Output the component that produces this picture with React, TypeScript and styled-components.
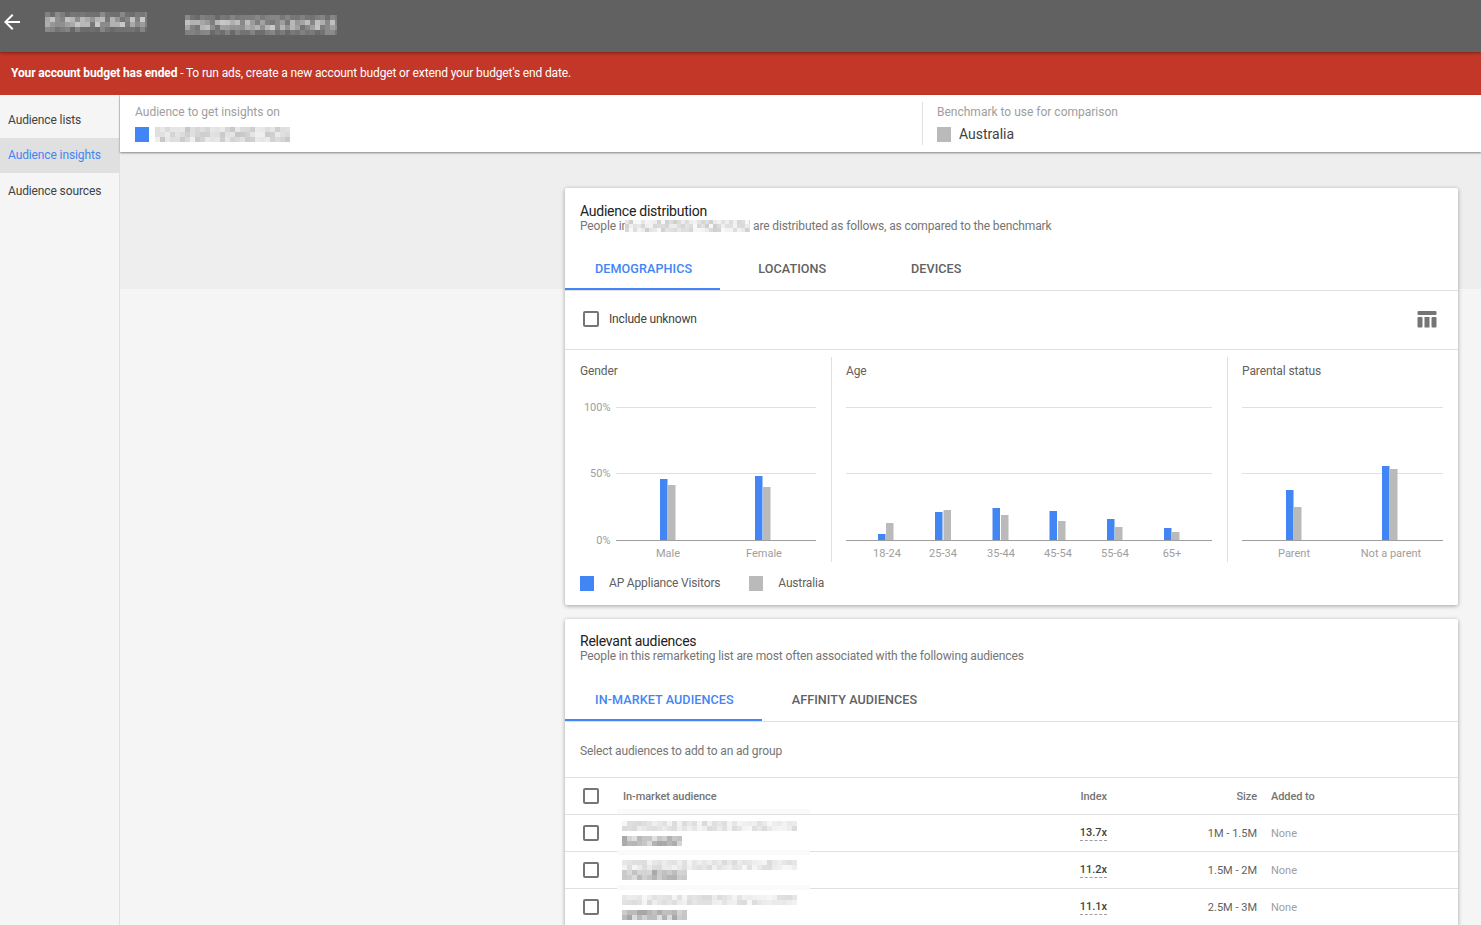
import React from 'react';
import styled, { createGlobalStyle } from 'styled-components';

const GlobalStyle = createGlobalStyle`
  html, body, #root {
    height: 100%;
    margin: 0;
  }
  body {
    overflow: hidden;
    font-family: Roboto, "Liberation Sans", sans-serif;
    color: #616161;
    background: #fff;
  }
`;

const Page = styled.div`
  display: flex;
  flex-direction: column;
  height: 100vh;
  overflow: hidden;
`;

const TopBar = styled.div`
  display: flex;
  align-items: center;
  flex: none;
  height: 52px;
  padding-bottom: 8px;
  box-sizing: border-box;
  background: #616161;
  box-shadow: 0 1px 3px rgba(0, 0, 0, 0.4);
  position: relative;
`;

const BackIcon = styled.svg`
  width: 24px;
  height: 24px;
  margin: 0 21px 0 0;
  fill: #fff;
`;

const Alert = styled.div`
  display: flex;
  align-items: center;
  flex: none;
  height: 43px;
  box-sizing: border-box;
  padding: 0 0 1px 11px;
  background: #c23727;
  color: #fff;
  font-size: 12px;
  letter-spacing: -0.135px;
`;

const AlertStrong = styled.strong`
  font-weight: 700;
  white-space: pre;
`;

const Body = styled.div`
  display: flex;
  flex: 1;
  min-height: 0;
`;

const Sidebar = styled.nav`
  flex: none;
  width: 120px;
  box-sizing: border-box;
  padding-top: 7px;
  background: #f5f5f5;
  border-right: 1px solid #e0e0e0;
`;

const NavItem = styled.div<{ $active?: boolean }>`
  display: flex;
  align-items: center;
  height: 35.5px;
  padding-left: 8px;
  font-size: 12px;
  letter-spacing: -0.12px;
  color: ${p => (p.$active ? '#4285f4' : '#424242')};
  background: ${p => (p.$active ? '#e0e0e0' : 'transparent')};
`;

const Main = styled.main`
  display: flex;
  flex-direction: column;
  flex: 1;
  min-width: 0;
`;

const SelectorBar = styled.div`
  display: flex;
  flex: none;
  height: 57px;
  box-sizing: border-box;
  padding-top: 7px;
  background: #fff;
  box-shadow: 0 1px 2px rgba(0, 0, 0, 0.45);
  position: relative;
`;

const Selector = styled.div<{ $divided?: boolean }>`
  box-sizing: border-box;
  height: 43px;
  padding-left: ${p => (p.$divided ? '14px' : '15px')};
  width: ${p => (p.$divided ? 'auto' : '802px')};
  flex: ${p => (p.$divided ? '1' : 'none')};
  border-left: ${p => (p.$divided ? '1px solid #e0e0e0' : 'none')};
`;

const SelectorLabel = styled.div`
  font-size: 12px;
  line-height: 20px;
  color: #9e9e9e;
`;

const SelectorValue = styled.div`
  display: flex;
  align-items: center;
  height: 24px;
  font-size: 14px;
  color: #424242;
`;

const Swatch = styled.span<{ $grey?: boolean }>`
  flex: none;
  width: 14px;
  height: 15px;
  background: ${p => (p.$grey ? '#bababa' : '#4285f4')};
`;

const SelectorName = styled.span<{ $tight?: boolean }>`
  margin-left: ${p => (p.$tight ? '6px' : '8px')};
`;

const Content = styled.div`
  flex: 1;
  min-height: 0;
  padding: 36px 23px 0 445px;
  background: linear-gradient(#eeeeee 137px, #f5f5f5 137px);
`;

const Card = styled.section`
  margin-bottom: 14px;
  background: #fff;
  border-radius: 2px;
  box-shadow: 0 1px 4px rgba(0, 0, 0, 0.35);
`;

const CardHead = styled.header<{ $raised?: boolean }>`
  padding: ${p => (p.$raised ? '14px 15px 16px' : '15px')};
`;

const CardTitle = styled.h2`
  margin: 0;
  font-size: 14px;
  letter-spacing: -0.24px;
  font-weight: 400;
  line-height: 16px;
  color: #212121;
`;

const CardSub = styled.div`
  display: flex;
  align-items: center;
  height: 14px;
  font-size: 12px;
  letter-spacing: -0.135px;
  color: #757575;
  white-space: pre;
`;

const InlineRedact = styled.span`
  display: flex;
  flex: none;
  margin: 0 3px 0 -3px;
  background: #fff;
`;

const Tabs = styled.div`
  display: flex;
  height: 43px;
  box-sizing: border-box;
  border-bottom: 1px solid #e0e0e0;
`;

const Tab = styled.div<{ $active?: boolean; $even?: boolean }>`
  display: flex;
  align-items: center;
  justify-content: center;
  box-sizing: border-box;
  height: 42px;
  min-width: 144px;
  padding: 1px ${p => (p.$even ? '29px' : '28px')} 0 ${p => (p.$even ? '29px' : '30px')};
  font-size: 12.6px;
  letter-spacing: 0.08px;
  font-weight: 500;
  color: ${p => (p.$active ? '#4285f4' : '#616161')};
  border-bottom: 2px solid ${p => (p.$active ? '#4285f4' : 'transparent')};
`;

const Toolbar = styled.div`
  display: flex;
  align-items: center;
  justify-content: space-between;
  height: 59px;
  box-sizing: border-box;
  padding: 0 21px 2px 18px;
  border-bottom: 1px solid #e0e0e0;
`;

const CheckLabel = styled.label`
  display: flex;
  align-items: center;
  gap: 10px;
  font-size: 12px;
  letter-spacing: -0.17px;
  color: #424242;
`;

const Checkbox = styled.span`
  display: block;
  flex: none;
  width: 16px;
  height: 16px;
  box-sizing: border-box;
  border: 2px solid #757575;
  border-radius: 2px;
`;

const ColumnsIcon = styled.svg`
  display: block;
  width: 20px;
  height: 17px;
  fill: #757575;
`;

const ChartRow = styled.div`
  display: flex;
  padding-top: 7px;
`;

const ChartPanel = styled.div<{ $width: number; $pad: number; $last?: boolean }>`
  flex: none;
  box-sizing: border-box;
  width: ${p => p.$width}px;
  height: 205px;
  padding: 7px 0 0 ${p => p.$pad}px;
  border-right: ${p => (p.$last ? 'none' : '1px solid #e0e0e0')};
`;

const PanelTitle = styled.div`
  font-size: 12px;
  letter-spacing: -0.1px;
  line-height: 14px;
  color: #616161;
`;

const ChartSvg = styled.svg`
  display: block;
  overflow: visible;
`;

const AxisText = styled.text`
  font-family: Roboto, "Liberation Sans", sans-serif;
  font-size: 11px;
  fill: #9e9e9e;
`;

const Legend = styled.div`
  display: flex;
  align-items: center;
  height: 43px;
  padding-left: 15px;
  font-size: 12px;
  letter-spacing: -0.17px;
  color: #616161;
`;

const LegendLabel = styled.span`
  margin: 0 29px 0 15px;
  padding-bottom: 1px;
`;

const SelectHint = styled.div`
  display: flex;
  align-items: center;
  height: 56px;
  box-sizing: border-box;
  padding: 3px 0 0 15px;
  font-size: 12px;
  letter-spacing: -0.135px;
  color: #757575;
  border-bottom: 1px solid #e0e0e0;
`;

const TableRow = styled.div`
  display: grid;
  grid-template-columns: 58px 384px 100px 150px 1fr;
  align-items: center;
  height: 37px;
  box-sizing: border-box;
  border-bottom: 1px solid #e0e0e0;
  font-size: 11px;
`;

const CheckCell = styled.div`
  padding-left: 18px;
`;

const HeadCell = styled.div<{ $right?: boolean; $gap?: boolean }>`
  font-weight: 500;
  letter-spacing: -0.08px;
  color: #757575;
  text-align: ${p => (p.$right ? 'right' : 'left')};
  padding-left: ${p => (p.$gap ? '14px' : '0')};
`;

// the ::before is the faint smear the blur left over the row line above
const NameCell = styled.div<{ $gap: number; $smear: number }>`
  display: flex;
  flex-direction: column;
  gap: ${p => p.$gap}px;
  margin-left: -1px;
  position: relative;

  &::before {
    content: '';
    position: absolute;
    top: ${p => p.$smear}px;
    left: -5px;
    width: 193px;
    height: 5px;
    background: #fafafa;
  }
`;

const IndexCell = styled.div`
  text-align: right;
`;

const IndexValue = styled.span`
  display: inline-block;
  margin-top: -2px;
  line-height: 13px;
  font-weight: 500;
  color: #424242;
  padding-bottom: 1px;
  border-bottom: 1px dashed #9e9e9e;
`;

const SizeCell = styled.div`
  text-align: right;
  color: #616161;
`;

const AddedCell = styled.div`
  padding-left: 14px;
  color: #9e9e9e;
`;

const RedactSvg = styled.svg`
  display: block;
  flex: none;
`;

const TopRedact = styled.div<{ $gap: number; $drop: number }>`
  margin: ${p => p.$drop}px ${p => p.$gap}px 0 0;
`;

interface RedactProps {
  width: number;
  height: number;
  cell: number;
  seed: number;
  color: string;
  base?: number;
  max?: number;
  shaped?: boolean;
}

// pixelated smear standing in for the blurred-out names
const Redact: React.FC<RedactProps> = ({ width, height, cell, seed, color, base = 0.12, max = 0.6, shaped }) => {
  const cols = Math.ceil(width / cell);
  const rows = Math.ceil(height / cell);
  const cells: React.ReactNode[] = [];
  for (let y = 0; y < rows; y++) {
    const fade = shaped ? Math.sin((Math.PI * (y + 0.5)) / rows) : 1;
    for (let x = 0; x < cols; x++) {
      const n = Math.sin((x + 1) * 12.9898 + (y + 1) * 78.233 + seed) * 43758.5453;
      const v = n - Math.floor(n);
      cells.push(
        <rect
          key={`${x}-${y}`}
          x={x * cell}
          y={y * cell}
          width={cell}
          height={cell}
          fill={color}
          opacity={(base + v * max) * fade}
        />
      );
    }
  }
  return (
    <RedactSvg width={width} height={height} viewBox={`0 0 ${width} ${height}`} shapeRendering="crispEdges">
      {cells}
    </RedactSvg>
  );
};

interface Group {
  label: string;
  center: number;
  blueX: number;
  greyX: number;
  blueTop: number;
  greyTop: number;
}

interface ChartProps {
  left: number;
  lineStart: number;
  lineEnd: number;
  groups: Group[];
  yLabels?: boolean;
}

const CHART_TOP = 378;

const Chart: React.FC<ChartProps> = ({ left, lineStart, lineEnd, groups, yLabels }) => {
  const y = (v: number) => v - CHART_TOP;
  const x = (v: number) => v - left;
  const width = lineEnd - left;
  return (
    <ChartSvg width={width} height={184} viewBox={`0 0 ${width} 184`}>
      {[407.5, 473.5].map(line => (
        <line key={line} x1={x(lineStart)} x2={x(lineEnd)} y1={y(line)} y2={y(line)} stroke="#e0e0e0" />
      ))}
      {groups.map(g => (
        <g key={g.label}>
          <rect x={x(g.blueX)} y={y(g.blueTop)} width={7.5} height={540 - g.blueTop} fill="#4285f4" />
          <rect x={x(g.greyX)} y={y(g.greyTop)} width={7.5} height={540 - g.greyTop} fill="#bababa" />
          <AxisText x={x(g.center)} y={y(557)} textAnchor="middle">
            {g.label}
          </AxisText>
        </g>
      ))}
      <line x1={x(lineStart)} x2={x(lineEnd)} y1={y(540.5)} y2={y(540.5)} stroke="#9e9e9e" />
      {yLabels && (
        <>
          <AxisText x={x(610.5)} y={y(411)} textAnchor="end">100%</AxisText>
          <AxisText x={x(610.5)} y={y(477)} textAnchor="end">50%</AxisText>
          <AxisText x={x(610.5)} y={y(544)} textAnchor="end">0%</AxisText>
        </>
      )}
    </ChartSvg>
  );
};

const gender: Group[] = [
  { label: 'Male', center: 668, blueX: 660, greyX: 668, blueTop: 479, greyTop: 485 },
  { label: 'Female', center: 764, blueX: 755, greyX: 763, blueTop: 476, greyTop: 487 }
];

const age: Group[] = [
  { label: '18-24', center: 887, blueX: 878, greyX: 886, blueTop: 534, greyTop: 523 },
  { label: '25-34', center: 943, blueX: 935, greyX: 943.5, blueTop: 512, greyTop: 510 },
  { label: '35-44', center: 1001, blueX: 992.5, greyX: 1001, blueTop: 508, greyTop: 515 },
  { label: '45-54', center: 1058, blueX: 1049.5, greyX: 1058, blueTop: 511, greyTop: 521 },
  { label: '55-64', center: 1115, blueX: 1107, greyX: 1115, blueTop: 519, greyTop: 527 },
  { label: '65+', center: 1172, blueX: 1164, greyX: 1172, blueTop: 528, greyTop: 532 }
];

const parental: Group[] = [
  { label: 'Parent', center: 1294, blueX: 1286, greyX: 1294, blueTop: 490, greyTop: 507 },
  { label: 'Not a parent', center: 1391, blueX: 1382, greyX: 1390, blueTop: 466, greyTop: 469 }
];

const audiences = [
  { seed: 3, second: 60, gap: 5, smear: -12, index: '13.7x', size: '1M - 1.5M' },
  { seed: 9, second: 65, gap: 0, smear: -10, index: '11.2x', size: '1.5M - 2M' },
  { seed: 17, second: 65, gap: 5, smear: -10, index: '11.1x', size: '2.5M - 3M' }
];

const App: React.FC = () => (
  <Page>
    <GlobalStyle />
    <TopBar>
      <BackIcon viewBox="0 0 24 24">
        <path d="M20 11H7.83l5.59-5.59L12 4l-8 8 8 8 1.41-1.41L7.83 13H20v-2z" />
      </BackIcon>
      <TopRedact $gap={38} $drop={0}>
        <Redact width={102} height={20} cell={5} seed={1} color="#ffffff" shaped />
      </TopRedact>
      <TopRedact $gap={0} $drop={6}>
        <Redact width={152} height={20} cell={5} seed={5} color="#ffffff" shaped />
      </TopRedact>
    </TopBar>
    <Alert>
      <AlertStrong>Your account budget has ended</AlertStrong>
      &nbsp;- To run ads, create a new account budget or extend your budget's end date.
    </Alert>
    <Body>
      <Sidebar>
        <NavItem>Audience lists</NavItem>
        <NavItem $active>Audience insights</NavItem>
        <NavItem>Audience sources</NavItem>
      </Sidebar>
      <Main>
        <SelectorBar>
          <Selector>
            <SelectorLabel>Audience to get insights on</SelectorLabel>
            <SelectorValue>
              <Swatch />
              <SelectorName $tight>
                <Redact width={135} height={15} cell={5} seed={11} color="#9e9e9e" base={0.15} max={0.45} />
              </SelectorName>
            </SelectorValue>
          </Selector>
          <Selector $divided>
            <SelectorLabel>Benchmark to use for comparison</SelectorLabel>
            <SelectorValue>
              <Swatch $grey />
              <SelectorName>Australia</SelectorName>
            </SelectorValue>
          </Selector>
        </SelectorBar>
        <Content>
          <Card>
            <CardHead>
              <CardTitle>Audience distribution</CardTitle>
              <CardSub>
                People in
                <InlineRedact>
                  <Redact width={125} height={12} cell={4} seed={21} color="#9e9e9e" base={0.05} max={0.45} />
                </InlineRedact>
                are distributed as follows, as compared to the benchmark
              </CardSub>
            </CardHead>
            <Tabs>
              <Tab $active>DEMOGRAPHICS</Tab>
              <Tab $even>LOCATIONS</Tab>
              <Tab $even>DEVICES</Tab>
            </Tabs>
            <Toolbar>
              <CheckLabel>
                <Checkbox />
                Include unknown
              </CheckLabel>
              <ColumnsIcon viewBox="0 0 20 17">
                <rect x="0.5" y="0" width="19" height="4" rx="1" />
                <rect x="0.5" y="6" width="5" height="10.5" rx="1" />
                <rect x="7.5" y="6" width="5" height="10.5" />
                <rect x="14.5" y="6" width="5" height="10.5" rx="1" />
              </ColumnsIcon>
            </Toolbar>
            <ChartRow>
              <ChartPanel $width={267} $pad={15}>
                <PanelTitle>Gender</PanelTitle>
                <Chart left={580} lineStart={616} lineEnd={816} groups={gender} yLabels />
              </ChartPanel>
              <ChartPanel $width={396} $pad={14}>
                <PanelTitle>Age</PanelTitle>
                <Chart left={846} lineStart={846} lineEnd={1212} groups={age} />
              </ChartPanel>
              <ChartPanel $width={230} $pad={14} $last>
                <PanelTitle>Parental status</PanelTitle>
                <Chart left={1242} lineStart={1242} lineEnd={1443} groups={parental} />
              </ChartPanel>
            </ChartRow>
            <Legend>
              <Swatch />
              <LegendLabel>AP Appliance Visitors</LegendLabel>
              <Swatch $grey />
              <LegendLabel>Australia</LegendLabel>
            </Legend>
          </Card>
          <Card>
            <CardHead $raised>
              <CardTitle>Relevant audiences</CardTitle>
              <CardSub>People in this remarketing list are most often associated with the following audiences</CardSub>
            </CardHead>
            <Tabs>
              <Tab $active>IN-MARKET AUDIENCES</Tab>
              <Tab>AFFINITY AUDIENCES</Tab>
            </Tabs>
            <SelectHint>Select audiences to add to an ad group</SelectHint>
            <TableRow>
              <CheckCell>
                <Checkbox />
              </CheckCell>
              <HeadCell>In-market audience</HeadCell>
              <HeadCell $right>Index</HeadCell>
              <HeadCell $right>Size</HeadCell>
              <HeadCell $gap>Added to</HeadCell>
            </TableRow>
            {audiences.map(a => (
              <TableRow key={a.index}>
                <CheckCell>
                  <Checkbox />
                </CheckCell>
                <NameCell $gap={a.gap} $smear={a.smear}>
                  <Redact width={175} height={10} cell={5} seed={a.seed} color="#9e9e9e" base={0.08} max={0.3} />
                  <Redact width={a.second} height={10} cell={5} seed={a.seed + 2} color="#757575" base={0.2} max={0.45} />
                </NameCell>
                <IndexCell>
                  <IndexValue>{a.index}</IndexValue>
                </IndexCell>
                <SizeCell>{a.size}</SizeCell>
                <AddedCell>None</AddedCell>
              </TableRow>
            ))}
          </Card>
        </Content>
      </Main>
    </Body>
  </Page>
);

export default App;
